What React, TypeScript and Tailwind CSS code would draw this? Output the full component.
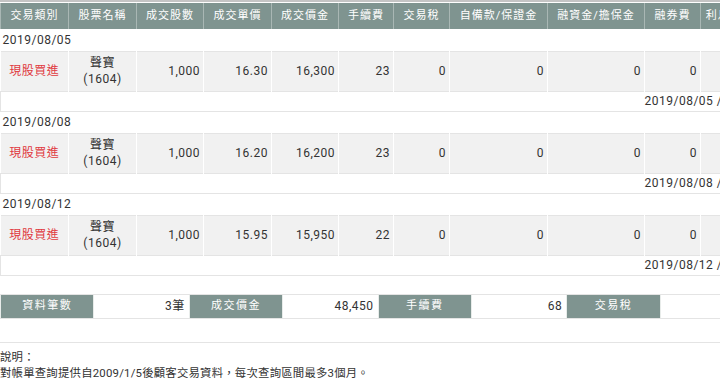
import React from "react";

const cols = [
  { label: "交易類別", w: 68 },
  { label: "股票名稱", w: 68 },
  { label: "成交股數", w: 67 },
  { label: "成交單價", w: 68 },
  { label: "成交價金", w: 67 },
  { label: "手續費", w: 55 },
  { label: "交易稅", w: 56 },
  { label: "自備款/保證金", w: 98 },
  { label: "融資金/擔保金", w: 97 },
  { label: "融券費", w: 56 },
  { label: "利息/借券費用", w: 88 },
  { label: "應收付金額", w: 90 },
];

const trades = [
  { date: "2019/08/05", price: "16.30", amount: "16,300", fee: "23", settle: "2019/08/07" },
  { date: "2019/08/08", price: "16.20", amount: "16,200", fee: "23", settle: "2019/08/12" },
  { date: "2019/08/12", price: "15.95", amount: "15,950", fee: "22", settle: "2019/08/14" },
];

const summary = [
  { label: "資料筆數", value: "3筆" },
  { label: "成交價金", value: "48,450" },
  { label: "手續費", value: "68" },
  { label: "交易稅", value: "" },
];

const num = "h-[40px] bg-[#f1f1f1] border-x border-white text-right pr-[3px] align-middle";

export default function App() {
  const tableWidth = cols.reduce((s, c) => s + c.w, 0);

  return (
    <div className="w-[720px] h-[388px] overflow-hidden bg-white text-[#333] font-[Roboto,'Noto_Sans_CJK_TC',sans-serif] text-[12px] tracking-[0.5px]">
      <div className="h-[2px] bg-[#c4c4c4]" />

      <table className="mt-px table-fixed border-collapse" style={{ width: tableWidth }}>
        <colgroup>
          {cols.map((c) => (
            <col key={c.label} style={{ width: c.w }} />
          ))}
        </colgroup>
        <thead>
          <tr>
            {cols.map((c) => (
              <th
                key={c.label}
                className="h-[26px] p-0 bg-[#7f9490] border-x border-[#a9b7b4] text-white font-normal text-[11px] tracking-[1px] text-center whitespace-nowrap"
              >
                {c.label}
              </th>
            ))}
          </tr>
        </thead>
        <tbody>
          {trades.map((t) => (
            <React.Fragment key={t.date}>
              <tr>
                <td colSpan={cols.length} className="h-[22px] p-0 pl-[2px] align-middle">
                  {t.date}
                </td>
              </tr>
              <tr className="border-y border-[#e4e4e4]">
                <td className="h-[40px] bg-[#f1f1f1] border-r border-white text-center text-[#e0383e] align-middle">
                  現股買進
                </td>
                <td className="h-[40px] bg-[#f1f1f1] border-x border-white text-center leading-[16px] align-middle">
                  聲寶
                  <br />
                  (1604)
                </td>
                <td className={num}>1,000</td>
                <td className={num}>{t.price}</td>
                <td className={num}>{t.amount}</td>
                <td className={num}>{t.fee}</td>
                <td className={num}>0</td>
                <td className={num}>0</td>
                <td className={num}>0</td>
                <td className={num}>0</td>
                <td className={num}>0</td>
                <td className={num}>-17,323</td>
              </tr>
              <tr className="border-b border-[#e4e4e4]">
                <td colSpan={9} className="h-[20px] p-0 border-l border-[#e4e4e4]" />
                <td colSpan={3} className="h-[20px] p-0 whitespace-nowrap align-middle">
                  {t.date} / {t.settle}
                </td>
              </tr>
            </React.Fragment>
          ))}
        </tbody>
      </table>

      <div className="mt-[18px] w-[755px] grid grid-cols-8 border-y border-[#e4e4e4]">
        {summary.map((s) => (
          <React.Fragment key={s.label}>
            <div className="h-[23px] flex items-center justify-center bg-[#7f9490] border-x border-[#e8ecea] text-white text-[11px] tracking-[1.5px]">
              {s.label}
            </div>
            <div className="h-[23px] flex items-center justify-end pr-[4px]">{s.value}</div>
          </React.Fragment>
        ))}
      </div>

      <div className="mt-[23px] border-t border-[#e4e4e4] pt-[6px] text-[11.4px] leading-[16px] tracking-[0.2px]">
        <p>說明：</p>
        <p>對帳單查詢提供自2009/1/5後顧客交易資料，每次查詢區間最多3個月。</p>
      </div>
    </div>
  );
}
